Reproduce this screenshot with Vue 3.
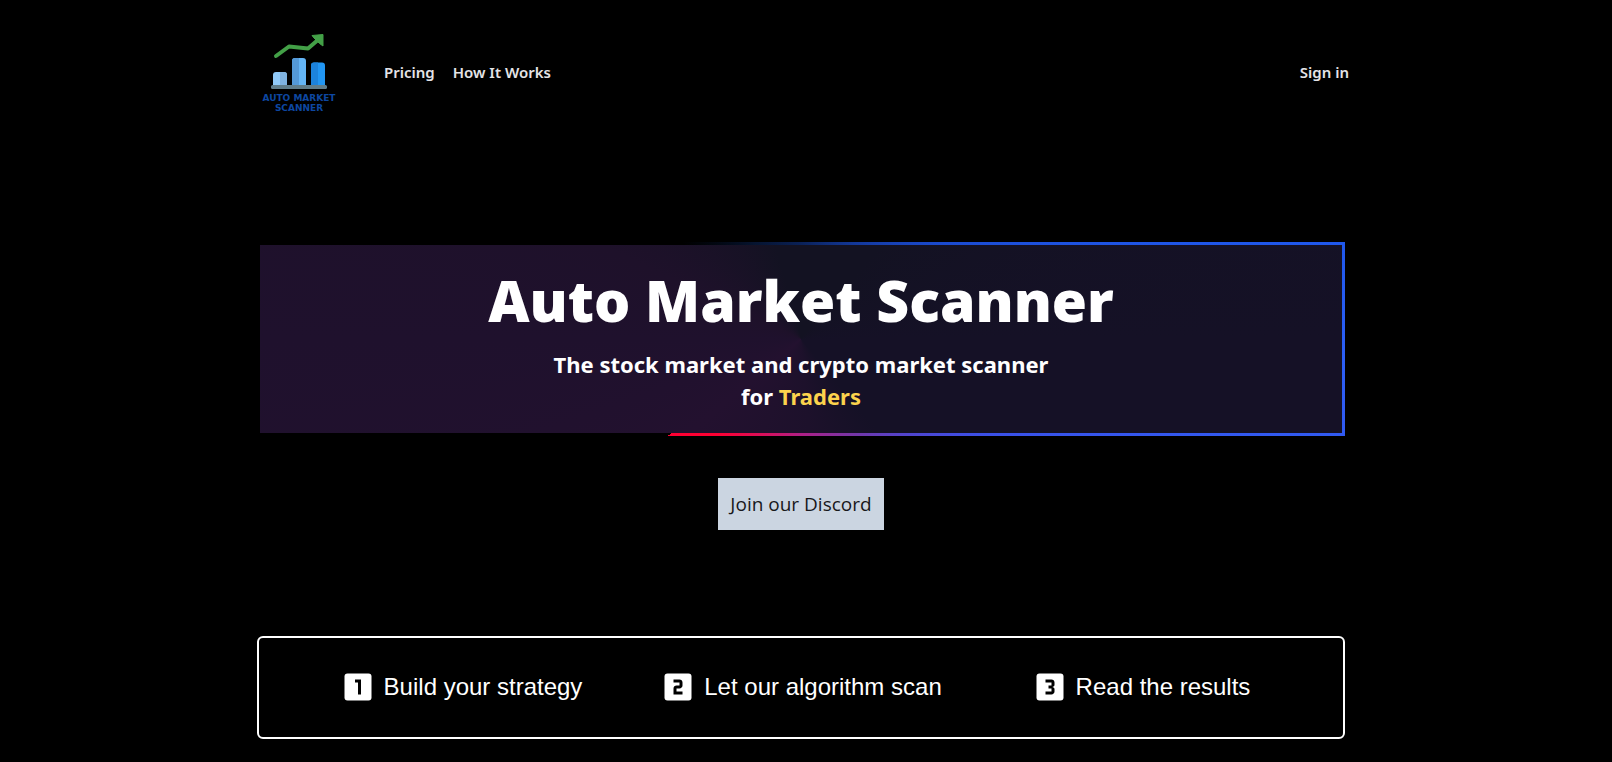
<script setup>
const navLinks = ['Pricing', 'How It Works']
const steps = [
  {
    label: 'Build your strategy',
    digit: 'M14 17h-2V9h-2V7h4v10z',
  },
  {
    label: 'Let our algorithm scan',
    digit: 'M15 11c0 1.11-.9 2-2 2h-2v2h4v2H9v-4c0-1.11.9-2 2-2h2V9H9V7h4c1.1 0 2 .89 2 2v2z',
  },
  {
    label: 'Read the results',
    digit: 'M15 10.500c0 .83-.67 1.500-1.500 1.500.83 0 1.500.67 1.500 1.500V15c0 1.110-.9 2-2 2H9v-2h4v-2h-2v-2h2V9H9V7h4c1.100 0 2 .89 2 2v1.500z',
  },
]
</script>

<template>
  <div class="page">
    <header class="header">
      <a href="#" class="logo" aria-label="Auto Market Scanner home">
        <svg viewBox="0 0 80 80" width="80" height="80" aria-hidden="true">
          <path d="M17 22 30 12.500 49 14.500 60 5" fill="none" stroke="#43a047" stroke-width="4" stroke-linejoin="round" stroke-linecap="round" />
          <path d="M53 1.500 64 .5V12L60.500 9.500 55 4z" fill="#43a047" stroke="#43a047" stroke-width="1" stroke-linejoin="round" />
          <path d="M14 52V41q0-3 3-3h8q3 0 3 3v11z" fill="#90caf9" />
          <path d="M21 38h4q3 0 3 3v11h-7z" fill="#7fb2e0" />
          <path d="M33 52V27q0-3 3-3h8q3 0 3 3v25z" fill="#64b5f6" />
          <path d="M33 52V27q0-3 3-3h4v28z" fill="#5499d8" />
          <path d="M52 52V31.500q0-3 3-3h8q3 0 3 3V52z" fill="#2196f3" />
          <path d="M52 52V31.500q0-3 3-3h4V52z" fill="#1c83dd" />
          <rect x="12" y="51" width="56" height="4" rx="1.500" fill="#607d8b" />
          <text x="40" y="67" class="logo-text">AUTO MARKET</text>
          <text x="40" y="77" class="logo-text">SCANNER</text>
        </svg>
      </a>
      <nav class="nav">
        <a v-for="link in navLinks" :key="link" href="#">{{ link }}</a>
      </nav>
      <a href="#" class="sign-in">Sign in</a>
    </header>

    <main class="main">
      <section class="hero">
        <h1>Auto Market Scanner</h1>
        <p>The stock market and crypto market scanner<br />for <span class="accent">Traders</span></p>
      </section>

      <a href="#" class="discord">Join our Discord</a>

      <ol class="steps">
        <li v-for="step in steps" :key="step.label">
          <svg viewBox="0 0 24 24" width="36" height="36" aria-hidden="true">
            <rect x="3" y="3" width="18" height="18" rx="2" fill="#fff" />
            <path :d="step.digit" fill="#000" />
          </svg>
          <span>{{ step.label }}</span>
        </li>
      </ol>
    </main>
  </div>
</template>

<style>
body {
  background: #000;
}
</style>

<style scoped>
.page {
  box-sizing: border-box;
  padding: 34px 34px 23px 24px;
  color: #fff;
  font-family: "Segoe UI", "Open Sans", "Noto Sans", sans-serif;
}

.header {
  display: flex;
  align-items: center;
  max-width: 1096px;
  margin: 0 auto;
}

.logo {
  display: block;
  margin-left: 6px;
}

.logo svg {
  display: block;
  overflow: visible;
}

.logo-text {
  fill: #0d47a1;
  font-family: "DejaVu Sans", sans-serif;
  font-size: 9px;
  font-weight: 700;
  text-anchor: middle;
}

.nav {
  display: flex;
  gap: 18px;
  margin-left: 45px;
}

.nav a,
.sign-in {
  margin-bottom: 4px;
  color: #e4e4e7;
  font-family: "Segoe UI", "Noto Sans", sans-serif;
  font-size: 15px;
  font-weight: 600;
  line-height: 24px;
  text-decoration: none;
}

.sign-in {
  margin-left: auto;
}

.main {
  display: flex;
  flex-direction: column;
  align-items: center;
  max-width: 1088px;
  margin: 128px auto 0;
}

.hero {
  box-sizing: border-box;
  width: 100%;
  padding: 25px 24px 21px;
  border: 3px solid transparent;
  background:
    conic-gradient(#131222 0deg, #131222 40deg, #151126 90deg, #151126 140deg, #1d112b 175deg, #23112f 230deg, #1f112d 270deg, #1e112a 295deg, #131222 345deg, #131222 360deg) padding-box,
    conic-gradient(#0a2158 0deg, #13389a 30deg, #1b4bd0 57deg, #2058ec 80deg, #2c5ff6 92deg, #3b50e8 117deg, #5045d0 131deg, #7436a8 150deg, #b01f86 180deg, #ff0033 222deg, #ff0033 234deg, #000 234deg, #000 309deg, #061430 334deg, #0a2158 360deg) border-box;
  text-align: center;
}

.hero h1 {
  margin: 0;
  font-size: 57px;
  font-weight: 800;
  line-height: 60px;
}

.hero p {
  margin: 18px 0 0;
  font-family: "Segoe UI", "Noto Sans", sans-serif;
  font-size: 22px;
  font-weight: 700;
  line-height: 32px;
}

.accent {
  color: #fcd34d;
}

.discord {
  margin-top: 42px;
  padding: 12px;
  background: #cbd5e1;
  color: #18181b;
  font-size: 19px;
  line-height: 28px;
  text-decoration: none;
}

.steps {
  box-sizing: border-box;
  display: grid;
  grid-template-columns: repeat(3, 1fr);
  width: 100%;
  margin: 106px 0 0;
  padding: 31px 32px 32px;
  border: 2px solid #fff;
  border-radius: 6px;
  list-style: none;
  font-family: Arial, "Liberation Sans", sans-serif;
  font-size: 24px;
  line-height: 36px;
}

.steps li {
  display: flex;
  align-items: center;
  justify-content: center;
  gap: 8px;
  white-space: nowrap;
}
</style>
